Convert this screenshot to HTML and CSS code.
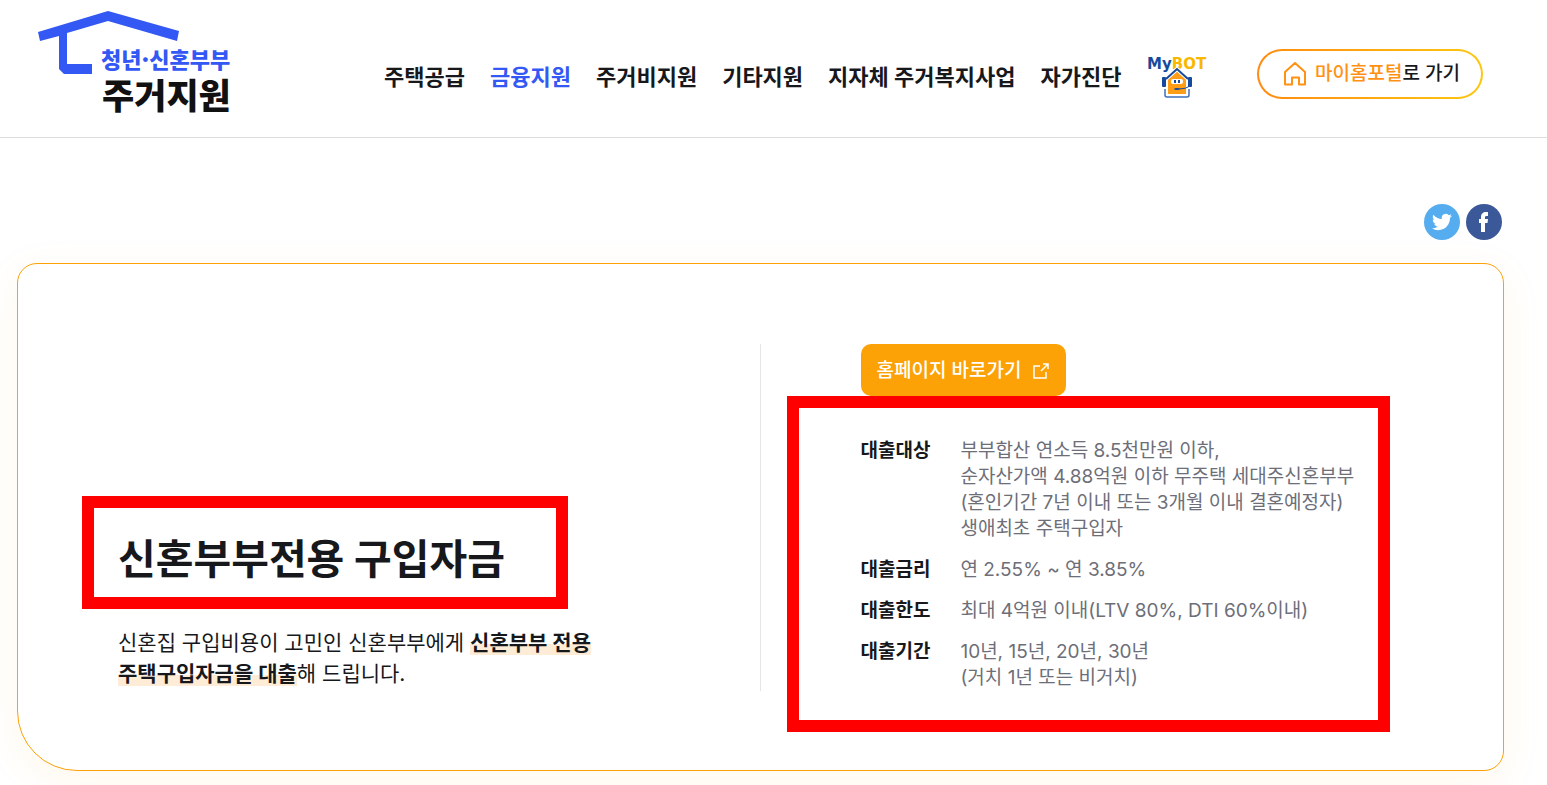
FILE: index.html
```
<!DOCTYPE html>
<html lang="ko">
<head>
    <meta charset="UTF-8">
    <meta name="viewport" content="width=device-width, initial-scale=1.0">
    <title>신혼부부전용 구입자금 | 청년·신혼부부 주거지원</title>
    <link rel="stylesheet" href="styles.css">
</head>
<body>
<header class="header">
    <a class="logo" href="#">
        <svg width="200" height="114" viewBox="0 0 200 114" role="img" aria-label="청년·신혼부부 주거지원">
            <path d="M0 21L70 0L141 20L139 30L70 10L29 22V53H54V63H26L21 58V25L2 30Z" fill="#3358f4"/>
            <text class="logo-top" x="63" y="57">청년·신혼부부</text>
            <text class="logo-bottom" x="64" y="98">주거지원</text>
        </svg>
    </a>

    <nav class="nav">
        <a href="#">주택공급</a>
        <a href="#" class="active">금융지원</a>
        <a href="#">주거비지원</a>
        <a href="#">기타지원</a>
        <a href="#">지자체 주거복지사업</a>
        <a href="#">자가진단</a>
        <a href="#" class="mybot">
            <svg width="62" height="44" viewBox="0 0 62 44" role="img" aria-label="MyBOT">
                <text class="mybot-text" x="1" y="14" fill="#164a9c">My<tspan fill="#f9b800">BOT</tspan></text>
                <path d="M19 34V40Q19 42 21 42H41Q43 42 43 40V34" fill="none" stroke="#3f6fb8" stroke-width="1.500"/>
                <path d="M22 24L31 16L40 24V39H22Z" fill="#ff9d16"/>
                <path d="M20 24L31 14L42 24" fill="none" stroke="#fff" stroke-width="4"/>
                <path d="M20 24L31 14L42 24" fill="none" stroke="#164a9c" stroke-width="2"/>
                <rect x="16" y="22" width="4" height="10" rx="1" fill="#164a9c"/>
                <rect x="42" y="22" width="4" height="10" rx="1" fill="#164a9c"/>
                <rect x="25" y="24" width="12" height="5" rx="2" fill="#fff"/>
                <rect x="28" y="25" width="2" height="3" fill="#164a9c"/>
                <rect x="32" y="25" width="2" height="3" fill="#164a9c"/>
                <path d="M44 31Q40 34 33 34" fill="none" stroke="#164a9c" stroke-width="1"/>
                <ellipse cx="31" cy="34" rx="3" ry="1" fill="#164a9c"/>
            </svg>
        </a>
    </nav>

    <a class="portal" href="#">
        <svg width="24" height="24" viewBox="0 0 24 24" fill="none" stroke="#ff9212" stroke-width="2" stroke-linejoin="round" aria-hidden="true">
            <path d="M2 10L12 1L22 10V22.500H16V15.500H9V22.500H2Z"/>
        </svg>
        <span><em>마이홈포털</em>로 가기</span>
    </a>
</header>

<main class="main">
    <div class="share">
        <a href="#" class="twitter" aria-label="트위터">
            <svg width="20" height="20" viewBox="0 0 24 24" fill="#fff" aria-hidden="true">
                <path d="M23.953 4.570a10 10 0 01-2.825.775 4.958 4.958 0 002.163-2.723c-.951.555-2.005.959-3.127 1.184a4.920 4.920 0 00-8.384 4.482C7.690 8.095 4.067 6.130 1.640 3.162a4.822 4.822 0 00-.666 2.475c0 1.710.870 3.213 2.188 4.096a4.904 4.904 0 01-2.228-.616v.060a4.923 4.923 0 003.946 4.827 4.996 4.996 0 01-2.212.085 4.936 4.936 0 004.604 3.417 9.867 9.867 0 01-6.102 2.105c-.390 0-.779-.023-1.170-.067a13.995 13.995 0 007.557 2.209c9.053 0 13.998-7.496 13.998-13.985 0-.210 0-.420-.015-.630A9.935 9.935 0 0024 4.590z"/>
            </svg>
        </a>
        <a href="#" class="facebook" aria-label="페이스북">
            <svg width="12" height="20" viewBox="0 0 12 20" fill="#fff" aria-hidden="true">
                <path d="M3 20V11H1V7H3V5C3 2 5 0 8 0H10V4H9C8 4 7 4 7 5V7H10L9.500 11H7V20Z"/>
            </svg>
        </a>
    </div>

    <section class="card">
        <div class="intro">
            <h1 class="marked">신혼부부전용 구입자금</h1>
            <p>신혼집 구입비용이 고민인 신혼부부에게 <strong>신혼부부 전용<br>주택구입자금을 대출</strong>해 드립니다.</p>
        </div>

        <div class="detail">
            <a class="go" href="#">
                홈페이지 바로가기
                <svg width="18" height="18" viewBox="0 0 18 18" fill="none" stroke="#fff" stroke-width="1.500" aria-hidden="true">
                    <path d="M8 4H2V16H14V10M11 2H16V7M16 2L9 9"/>
                </svg>
            </a>
            <dl class="marked">
                <dt>대출대상</dt>
                <dd>부부합산 연소득 8.5천만원 이하,<br>순자산가액 4.88억원 이하 무주택 세대주신혼부부<br>(혼인기간 7년 이내 또는 3개월 이내 결혼예정자)<br>생애최초 주택구입자</dd>
                <dt>대출금리</dt>
                <dd>연 2.55% ~ 연 3.85%</dd>
                <dt>대출한도</dt>
                <dd>최대 4억원 이내(LTV 80%, DTI 60%이내)</dd>
                <dt>대출기간</dt>
                <dd>10년, 15년, 20년, 30년<br>(거치 1년 또는 비거치)</dd>
            </dl>
        </div>
    </section>
</main>
</body>
</html>
```
FILE: styles.css
```
* {
    box-sizing: border-box;
}

body {
    margin: 0;
    font-family: Inter, 'Noto Sans CJK KR', sans-serif;
    font-size: 19px;
    line-height: 26px;
    color: #17181b;
    background: #fff;
    word-break: keep-all;
}

a {
    color: inherit;
    text-decoration: none;
}

svg {
    display: block;
    flex-shrink: 0;
}

/* header */
.header {
    display: flex;
    align-items: flex-start;
    padding: 11px 64px 12px 38px;
    border-bottom: 1px solid #ddd;
}

.logo-top,
.logo-bottom {
    font-family: 'Noto Sans CJK KR', sans-serif;
    font-weight: 900;
}

.logo-top {
    font-size: 22px;
    fill: #3358f4;
}

.logo-bottom {
    font-size: 35px;
    fill: #111;
}

.nav {
    display: flex;
    align-items: center;
    gap: 25px;
    margin: 44px 0 0 146px;
    font-size: 22px;
    font-weight: 700;
    white-space: nowrap;
}

.nav .active {
    color: #3358f4;
}

.mybot-text {
    font-family: 'DejaVu Sans', sans-serif;
    font-size: 15px;
    font-weight: 700;
}

.portal {
    display: flex;
    align-items: center;
    gap: 8px;
    height: 50px;
    margin: 38px 0 0 auto;
    padding: 0 21px 0 24px;
    border: 2px solid transparent;
    border-radius: 25px;
    background: linear-gradient(#fff, #fff) padding-box, linear-gradient(90deg, #ff8a10, #fcc810) border-box;
    font-weight: 500;
    white-space: nowrap;
}

.portal em {
    font-style: normal;
    color: #ff9212;
}

/* content */
.main {
    padding: 66px 43px 14px 17px;
}

.share {
    display: flex;
    justify-content: flex-end;
    gap: 6px;
    padding-right: 2px;
    margin-bottom: 23px;
}

.share a {
    display: flex;
    align-items: center;
    justify-content: center;
    width: 36px;
    height: 36px;
    border-radius: 50%;
}

.twitter {
    background: #55acee;
}

.facebook {
    background: #3b5998;
}

.card {
    display: grid;
    grid-template-columns: 1fr 1fr;
    padding: 80px 0 79px;
    border: 1px solid #fca106;
    border-radius: 20px 20px 20px 60px;
    box-shadow: 0 10px 40px rgba(252, 161, 6, 0.08);
    background: #fff;
}

.intro {
    display: flex;
    flex-direction: column;
    align-items: flex-start;
    justify-content: flex-end;
    padding: 0 0 2px 100px;
    border-right: 1px solid #e5e5e5;
}

.intro h1 {
    margin: 0 0 42px;
    font-size: 41px;
    line-height: 52px;
}

.intro p {
    margin: 0;
    font-size: 21px;
    line-height: 31px;
}

.intro strong {
    background: linear-gradient(transparent 54%, #ffecd6 54%);
}

.detail {
    padding-left: 100px;
}

.go {
    display: inline-flex;
    align-items: center;
    gap: 11px;
    height: 52px;
    padding: 2px 16px 0;
    border-radius: 10px;
    background: #fca106;
    color: #fff;
    font-weight: 500;
}

.detail dl {
    display: grid;
    grid-template-columns: max-content max-content;
    justify-content: start;
    gap: 15px 30px;
    width: max-content;
    margin: 42px 0 0;
}

.detail dt {
    font-weight: 700;
}

.detail dd {
    margin: 0;
    color: #6d6e78;
}

/* red frame round the key facts */
.marked {
    position: relative;
}

.marked::after {
    content: '';
    position: absolute;
    inset: -37px -63px -24px -36px;
    border: 12px solid #f00;
    pointer-events: none;
}

.detail .marked::after {
    inset: -42px -36px -41px -74px;
}
```
